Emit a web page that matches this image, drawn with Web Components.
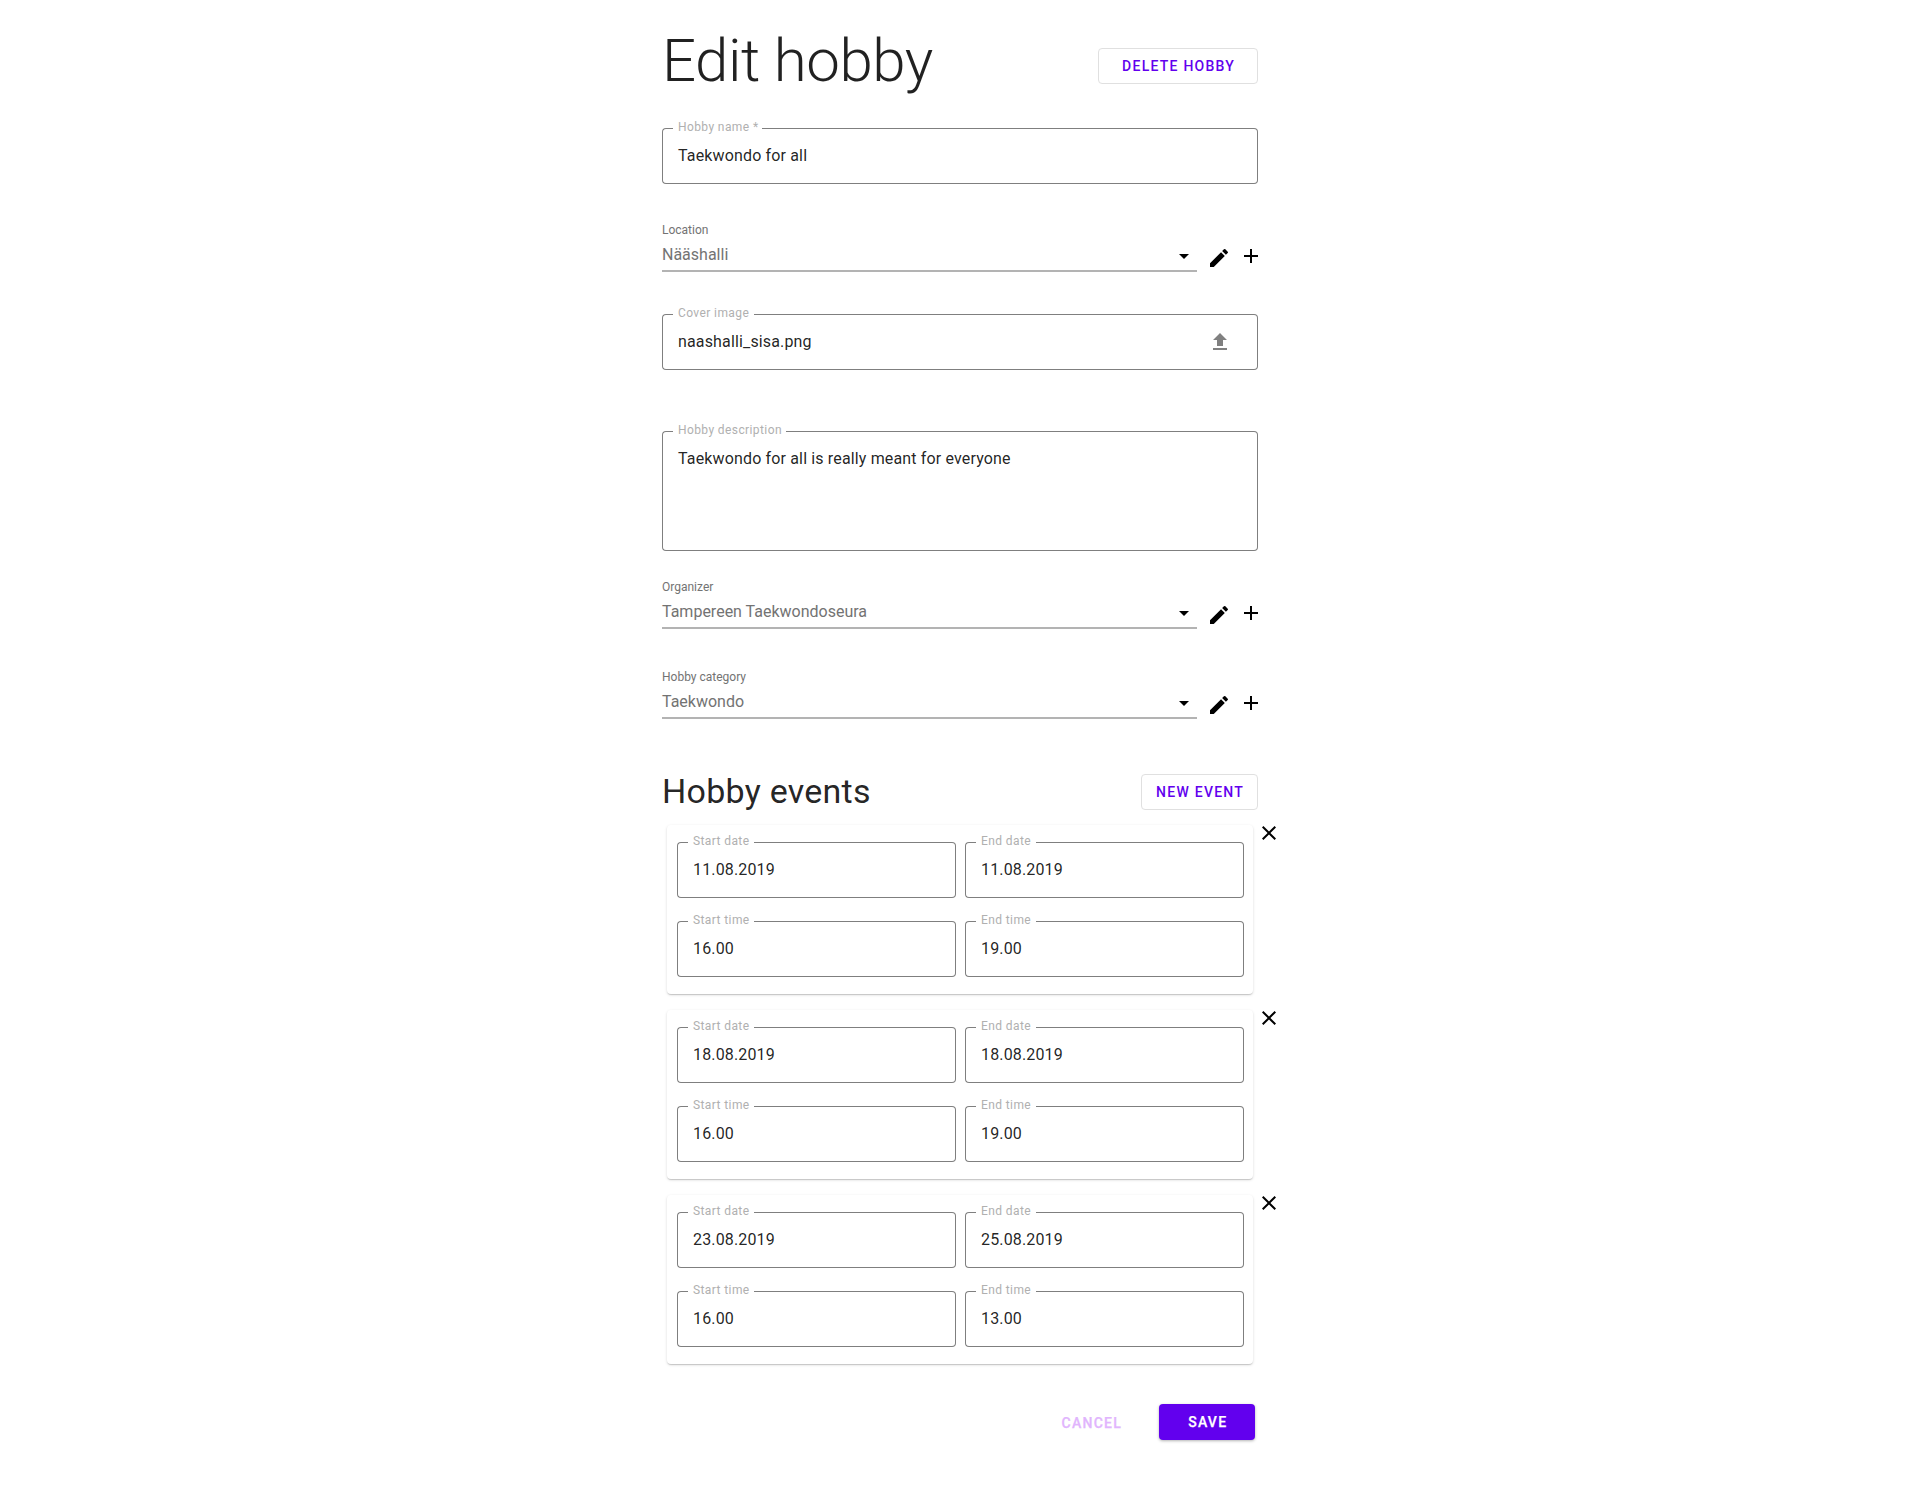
<!DOCTYPE html>
<html lang="en">
<head>
<meta charset="utf-8">
<title>Edit hobby</title>
<style>
body { margin: 0; background: #fff; color: rgba(0,0,0,.87); font-family: Roboto, sans-serif; }
</style>
</head>
<body>
<hobby-form></hobby-form>
<script>
const define = (name, css, html) => customElements.define(name, class extends HTMLElement {
  constructor() {
    super();
    this.attachShadow({ mode: 'open' });
  }
  connectedCallback() {
    this.shadowRoot.innerHTML = `<style>*{box-sizing:border-box}${css}</style>` + (typeof html === 'function' ? html(this) : html);
  }
});

const ICONS = {
  down: 'M7 10l5 5 5-5z',
  edit: 'M3 17.25V21h3.75L17.81 9.94l-3.75-3.75L3 17.25zM20.71 7.04a.996.996 0 0 0 0-1.41l-2.34-2.34a.996.996 0 0 0-1.41 0l-1.83 1.83 3.75 3.75 1.83-1.83z',
  add: 'M19 13h-6v6h-2v-6H5v-2h6V5h2v6h6v2z',
  upload: 'M9 16h6v-6h4l-7-7-7 7h4zm-4 2h14v2H5z',
  close: 'M19 6.41L17.59 5 12 10.59 6.41 5 5 6.41 10.59 12 5 17.59 6.41 19 12 13.41 17.59 19 19 17.59 13.41 12z'
};
define('md-icon', `:host{display:block;width:24px;height:24px;flex:none} svg{display:block;fill:currentColor}`,
  el => `<svg width="24" height="24" viewBox="0 0 24 24"><path d="${ICONS[el.getAttribute('name')]}"/></svg>`);

define('md-button', `
:host{display:flex;align-items:center;justify-content:center;height:36px;box-sizing:border-box;flex:none;
  font:500 14px/36px Roboto,sans-serif;letter-spacing:1.25px;text-indent:1.25px;border-radius:4px;color:#6200ee;white-space:nowrap}
:host([kind=outlined]){border:1px solid #e0e0e0}
:host([kind=text]){color:#e1b5fd;-webkit-text-stroke:.25px}
:host([kind=contained]){background:#6200ee;color:#fff;box-shadow:0 1px 3px rgba(0,0,0,.3);text-indent:2px;-webkit-text-stroke:.25px}`, `<slot></slot>`);

define('md-field', `
:host{display:grid;height:var(--field-height,56px);box-sizing:border-box}
.outline,.content{grid-area:1/1;display:flex;min-width:0}
.outline div{border:0 solid #7f7f7f}
.lead{width:11px;border-width:1px 0 1px 1px!important;border-radius:4px 0 0 4px}
.notch{border-bottom-width:1px!important;padding-left:5px;white-space:nowrap;
  font-size:12px;line-height:14px;letter-spacing:.4px;color:#b0b0b0}
.notch span{display:block;margin-top:-8px}
.trail{flex:1;border-width:1px 1px 1px 0!important;border-radius:0 4px 4px 0}
.content{padding:18px 26px 0 16px;justify-content:space-between;align-items:flex-start;font-size:16px;line-height:20px;letter-spacing:.15px}
::slotted(md-icon){color:#808080;margin-top:-2px}`,
  el => `<div class="outline"><div class="lead"></div><div class="notch" style="width:${el.getAttribute('notch')}px"><span>${el.getAttribute('label')}</span></div><div class="trail"></div></div>
<div class="content"><span>${el.getAttribute('value')}</span><slot></slot></div>`);

define('md-select', `
:host{display:flex;height:50px}
.box{flex:none;width:535px;height:50px;border-bottom:2px solid #b3b3b3;color:#737373}
.label{font-size:12px;line-height:14px;height:16px;padding-top:1px}
.row{display:flex;justify-content:space-between;padding:7px 1px 0 0;font-size:16px;line-height:20px}
.row md-icon{color:#000;margin-top:-1px}
.edit{margin:24px 0 0 10px;color:#000}
.add{margin:22px 0 0 8px;color:#000}`,
  el => `<div class="box"><div class="label">${el.getAttribute('label')}</div><div class="row"><span>${el.getAttribute('value')}</span><md-icon name="down"></md-icon></div></div>
<md-icon class="edit" name="edit"></md-icon><md-icon class="add" name="add"></md-icon>`);

define('event-card', `
:host{display:flex;align-items:flex-start;width:615px}
.card{margin-left:5px;width:586px;height:169px;padding:17px 10px 0;border-radius:4px;background:#fff;
  box-shadow:0 2px 1px -1px rgba(0,0,0,.08),0 1px 1px rgba(0,0,0,.07),0 1px 3px rgba(0,0,0,.14);
  display:grid;grid-template-columns:278.5px 278.5px;grid-auto-rows:56px;gap:23px 9.5px}
md-icon{margin:-4px 0 0 4px;color:#000}`,
  el => {
    const [sd, ed, st, et] = el.getAttribute('when').split(' ');
    return `<div class="card">
<md-field label="Start date" notch="66" value="${sd}"></md-field><md-field label="End date" notch="60" value="${ed}"></md-field>
<md-field label="Start time" notch="66" value="${st}"></md-field><md-field label="End time" notch="60" value="${et}"></md-field>
</div><md-icon name="close"></md-icon>`;
  });

define('hobby-form', `
:host{display:flex;flex-direction:column;width:596px;margin:0 auto;height:1486px}
header{display:flex;justify-content:space-between;height:128px;flex:none;padding-top:30px}
h1{margin:1px 0 0;font-weight:300;font-size:60px;line-height:60px;letter-spacing:-.5px}
h2{margin:-3px 0 0;font-weight:400;font-size:34px;line-height:40px;letter-spacing:.25px}
.del{width:160px;margin-top:18px}
.loc{margin-top:38px}.cover{margin-top:42px}
.desc{--field-height:120px;margin-top:61px}
.org{margin-top:28px}.cat{margin-top:40px}
.events{display:flex;justify-content:space-between;margin-top:52px;height:54px;padding-top:3px}
.new{width:117px}
.list{display:flex;flex-direction:column;gap:16px}
footer{display:flex;margin-top:40px;justify-content:flex-end;padding-right:3.5px}
.cancel{padding-top:1px;margin-right:37px}.save{width:95.5px}`, `
<header><h1>Edit hobby</h1><md-button class="del" kind="outlined">DELETE HOBBY</md-button></header>
<md-field label="Hobby name *" notch="89" value="Taekwondo for all"></md-field>
<md-select class="loc" label="Location" value="Nääshalli"></md-select>
<md-field class="cover" label="Cover image" notch="81" value="naashalli_sisa.png"><md-icon name="upload"></md-icon></md-field>
<md-field class="desc" label="Hobby description" notch="113" value="Taekwondo for all is really meant for everyone"></md-field>
<md-select class="org" label="Organizer" value="Tampereen Taekwondoseura"></md-select>
<md-select class="cat" label="Hobby category" value="Taekwondo"></md-select>
<section class="events"><h2>Hobby events</h2><md-button class="new" kind="outlined">NEW EVENT</md-button></section>
<section class="list">
<event-card when="11.08.2019 11.08.2019 16.00 19.00"></event-card>
<event-card when="18.08.2019 18.08.2019 16.00 19.00"></event-card>
<event-card when="23.08.2019 25.08.2019 16.00 13.00"></event-card>
</section>
<footer><md-button class="cancel" kind="text">CANCEL</md-button><md-button class="save" kind="contained">SAVE</md-button></footer>`);
</script>
</body>
</html>
